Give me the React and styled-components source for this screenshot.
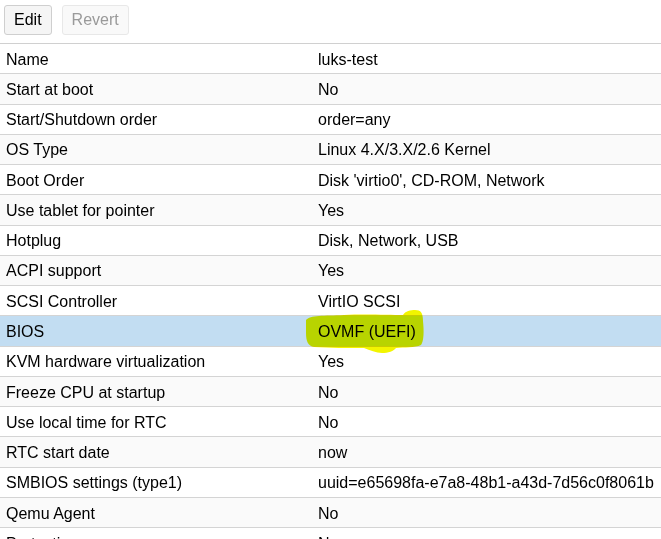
import React from "react";
import styled, { createGlobalStyle } from "styled-components";

const Global = createGlobalStyle`
  html, body { margin: 0; padding: 0; background: #fff; }
  body { font-family: "Liberation Sans", Arial, sans-serif; font-size: 16px; color: #000; }
`;

const Page = styled.div`
  width: 661px;
  height: 539px;
  overflow: hidden;
  background: #fff;
`;

const Toolbar = styled.div`
  display: flex;
  align-items: flex-start;
  gap: 10px;
  height: 44px;
  padding: 5px 0 0 4px;
  box-sizing: border-box;
  border-bottom: 1px solid #d0d0d0;
`;

const Button = styled.button`
  font-family: inherit;
  font-size: 16px;
  height: 30px;
  padding: 0 9px;
  border-radius: 3px;
  border: 1px solid ${(p) => (p.disabled ? "#e8e8e8" : "#cfcfcf")};
  background: ${(p) => (p.disabled ? "#f9f9f9" : "#f5f5f5")};
  color: ${(p) => (p.disabled ? "#9a9a9a" : "#000")};
`;

const Table = styled.div`
  display: flex;
  flex-direction: column;
`;

const Row = styled.div`
  display: grid;
  grid-template-columns: 312px 1fr;
  height: 30.27px;
  box-sizing: border-box;
  border-bottom: 1px solid #d4d4d4;
  background: ${(p) => (p.selected ? "#c2ddf2" : p.odd ? "#fafafa" : "#fff")};
  align-items: center;
`;

const Cell = styled.div`
  position: relative;
  padding: 2px 0 0 6px;
  white-space: nowrap;
  overflow: ${(p) => (p.visible ? "visible" : "hidden")};
  line-height: 18px;
`;

const Text = styled.span`
  position: relative;
  z-index: 1;
`;

const Marker = styled.svg`
  position: absolute;
  left: -8px;
  top: -12px;
  z-index: 0;
  mix-blend-mode: multiply;
  pointer-events: none;
`;

const rows = [
  ["Name", "luks-test"],
  ["Start at boot", "No"],
  ["Start/Shutdown order", "order=any"],
  ["OS Type", "Linux 4.X/3.X/2.6 Kernel"],
  ["Boot Order", "Disk 'virtio0', CD-ROM, Network"],
  ["Use tablet for pointer", "Yes"],
  ["Hotplug", "Disk, Network, USB"],
  ["ACPI support", "Yes"],
  ["SCSI Controller", "VirtIO SCSI"],
  ["BIOS", "OVMF (UEFI)"],
  ["KVM hardware virtualization", "Yes"],
  ["Freeze CPU at startup", "No"],
  ["Use local time for RTC", "No"],
  ["RTC start date", "now"],
  ["SMBIOS settings (type1)", "uuid=e65698fa-e7a8-48b1-a43d-7d56c0f8061b"],
  ["Qemu Agent", "No"],
  ["Protection", "No"],
];

function Highlight() {
  return (
    <Marker width="130" height="50" viewBox="0 0 130 50">
      <path
        d="M2 11 C6 6 20 7 40 6 C60 5 85 6 99 6 C101 2 107 1 111 1 C117 1 119 4 119 12 C120 22 120 32 117 36 C111 39 100 38 92 39 C90 42 84 44 78 44 C72 44 66 41 60 39 C45 39 25 39 10 38 C4 37 2 32 2 24 Z"
        fill="#f2f500"
      />
    </Marker>
  );
}

export default function App() {
  return (
    <Page>
      <Global />
      <Toolbar>
        <Button>Edit</Button>
        <Button disabled>Revert</Button>
      </Toolbar>
      <Table>
        {rows.map(([k, v], i) => (
          <Row key={k} odd={i % 2 === 1} selected={k === "BIOS"}>
            <Cell>{k}</Cell>
            <Cell visible={k === "BIOS"}>
              {k === "BIOS" && <Highlight />}
              <Text>{v}</Text>
            </Cell>
          </Row>
        ))}
      </Table>
    </Page>
  );
}
